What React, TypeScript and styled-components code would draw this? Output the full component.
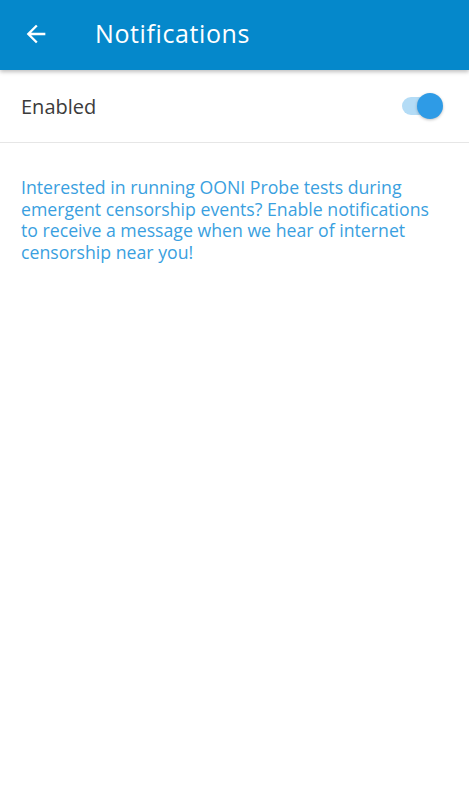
import React, { useState } from "react";
import styled, { createGlobalStyle } from "styled-components";

const Global = createGlobalStyle`
  html, body { margin: 0; padding: 0; background: #ffffff; }
  body { font-family: "Open Sans", "Noto Sans", sans-serif; }
`;

const Page = styled.div`
  width: 469px;
  min-height: 800px;
  background: #fff;
  display: flex;
  flex-direction: column;
`;

const AppBar = styled.header`
  height: 70px;
  background: #0588cb;
  display: flex;
  align-items: center;
  box-shadow: 0 2px 4px rgba(0, 0, 0, 0.25);
  position: relative;
  z-index: 1;
`;

const BackButton = styled.button`
  width: 72px;
  height: 70px;
  border: 0;
  background: transparent;
  padding: 0 0 3px 22px;
  display: flex;
  align-items: center;
  cursor: pointer;
`;

const Title = styled.h1`
  margin: 0 0 4px 23px;
  font-size: 25px;
  font-weight: 400;
  color: #ffffff;
  letter-spacing: 0.6px;
`;

const Row = styled.div`
  height: 72px;
  display: flex;
  align-items: center;
  justify-content: space-between;
  padding: 0 26px 0 21px;
  border-bottom: 1px solid #e6e6e6;
`;

const Label = styled.span`
  font-size: 20px;
  color: #3b3b3b;
`;

const Track = styled.div<{ $on: boolean }>`
  width: 30px;
  height: 18px;
  margin-right: 11px;
  border-radius: 9px;
  background: ${(p) => (p.$on ? "#b4dcf6" : "#cfcfcf")};
  position: relative;
  cursor: pointer;
`;

const Thumb = styled.div<{ $on: boolean }>`
  position: absolute;
  top: -4px;
  left: ${(p) => (p.$on ? "15px" : "-6px")};
  width: 26px;
  height: 26px;
  border-radius: 50%;
  background: ${(p) => (p.$on ? "#2e9be6" : "#f5f5f5")};
  box-shadow: 0 1px 3px rgba(0, 0, 0, 0.25);
`;

const Info = styled.p`
  margin: 34px 36px 0 21px;
  font-size: 17.7px;
  line-height: 21.7px;
  color: #3a9fe0;
`;

export default function App() {
  const [on, setOn] = useState(true);
  return (
    <Page>
      <Global />
      <AppBar>
        <BackButton aria-label="Back">
          <svg width="28" height="28" viewBox="0 0 24 24">
            <path d="M20 11H7.83l5.59-5.59L12 4l-8 8 8 8 1.41-1.41L7.83 13H20v-2z" fill="#fff" />
          </svg>
        </BackButton>
        <Title>Notifications</Title>
      </AppBar>
      <Row>
        <Label>Enabled</Label>
        <Track $on={on} onClick={() => setOn(!on)}>
          <Thumb $on={on} />
        </Track>
      </Row>
      <Info>
        Interested in running OONI Probe tests during emergent censorship events? Enable notifications to receive a message when we hear of internet censorship near you!
      </Info>
    </Page>
  );
}
